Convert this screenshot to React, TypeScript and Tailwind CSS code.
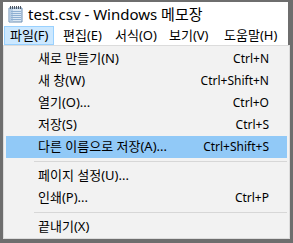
import React from "react";

const font = { fontFamily: '"Noto Sans", "Noto Sans CJK KR", sans-serif' };

type Item = { label: string; shortcut?: string; active?: boolean } | "sep";

const items: Item[] = [
  { label: "새로 만들기(N)", shortcut: "Ctrl+N" },
  { label: "새 창(W)", shortcut: "Ctrl+Shift+N" },
  { label: "열기(O)...", shortcut: "Ctrl+O" },
  { label: "저장(S)", shortcut: "Ctrl+S" },
  { label: "다른 이름으로 저장(A)...", shortcut: "Ctrl+Shift+S", active: true },
  "sep",
  { label: "페이지 설정(U)..." },
  { label: "인쇄(P)...", shortcut: "Ctrl+P" },
  "sep",
  { label: "끝내기(X)" },
];

function NotepadIcon() {
  return (
    <svg width="17" height="18" viewBox="0 0 17 18">
      <path d="M2 3 L15 3 L15 17 L2 17 Z" fill="#dbe8f4" stroke="#6d8fb3" strokeWidth="1" />
      <path d="M2.5 3.5 L6 3.5 L6 16.5 L2.5 16.5 Z" fill="#b6cde4" />
      {[6, 8, 10, 12, 14].map((y) => (
        <line key={y} x1="4" y1={y + 0.5} x2="14" y2={y + 0.5} stroke="#8fb0d2" strokeWidth="1" />
      ))}
      {[3, 5, 7, 9, 11, 13].map((x) => (
        <rect key={x} x={x} y="1" width="1" height="3" fill="#4b5563" />
      ))}
    </svg>
  );
}

export default function App() {
  return (
    <div className="w-[293px] h-[243px] bg-[#6e6e6e] pt-[2px] pl-[3px] overflow-hidden" style={font}>
      <div className="w-[285px] h-[24px] bg-white flex items-center pl-[4px] gap-[4px]">
        <NotepadIcon />
        <span className="text-[15px] text-black leading-none whitespace-nowrap">test.csv - Windows 메모장</span>
      </div>
      <div className="w-[285px] h-[19px] bg-white flex items-stretch pl-[1px] text-[13px] text-black">
        <div className="w-[50px] mr-[2px] pl-[5px] flex items-center bg-[#cce8ff] border border-[#99d1ff] whitespace-nowrap">파일(F)</div>
        <div className="w-[52px] pl-[7px] flex items-center whitespace-nowrap">편집(E)</div>
        <div className="w-[54px] pl-[7px] flex items-center whitespace-nowrap">서식(O)</div>
        <div className="w-[55px] pl-[7px] flex items-center whitespace-nowrap">보기(V)</div>
        <div className="pl-[7px] flex items-center whitespace-nowrap">도움말(H)</div>
      </div>
      <div className="w-[287px] h-[194px] bg-[#f2f2f2] border border-[#dcdcdc] pt-[2px] px-[2px] text-black">
        {items.map((it, i) =>
          it === "sep" ? (
            <div key={i} className="h-[7px] pl-[28px] pt-[3px]">
              <div className="h-[1px] bg-[#d7d7d7]" />
            </div>
          ) : (
            <div
              key={i}
              className={
                "h-[22px] flex items-center justify-between pl-[32px] pr-[18px] whitespace-nowrap " +
                (it.active ? "bg-[#91c9f7]" : "")
              }
            >
              <span className="text-[13px]">{it.label}</span>
              <span className="text-[12px]">{it.shortcut ?? ""}</span>
            </div>
          )
        )}
      </div>
    </div>
  );
}
